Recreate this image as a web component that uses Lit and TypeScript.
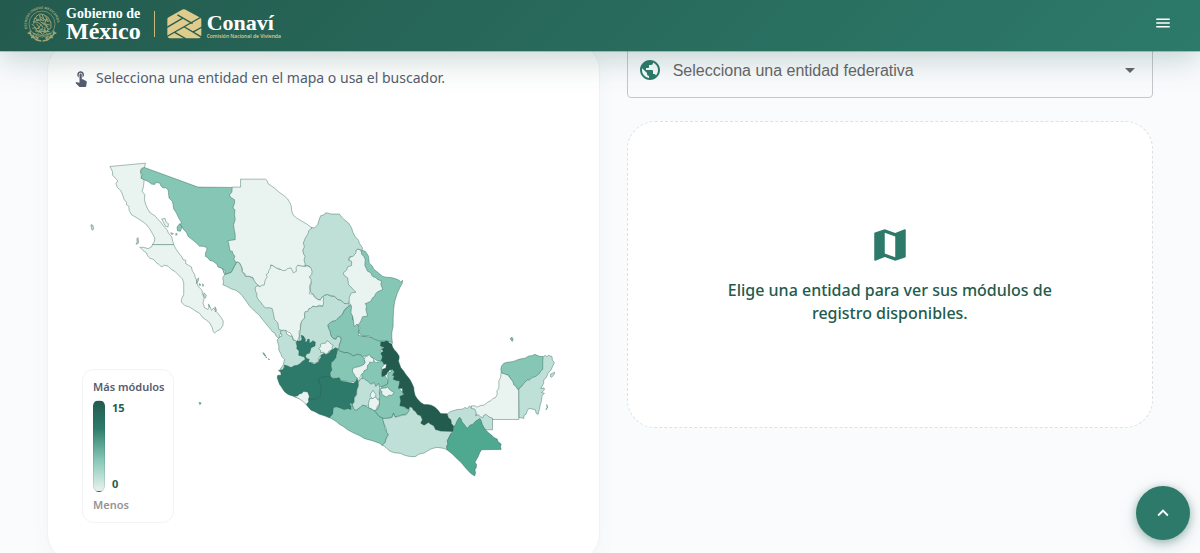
import { LitElement, html, svg, css } from "lit";
import { customElement, state } from "lit/decorators.js";

type Tone = "t0" | "t1" | "t2" | "t3" | "t4" | "t5";
interface Shape {
  name: string;
  tone: Tone;
  d: string;
}
interface Sheet {
  x: number;
  y: number;
  shapes: Shape[];
}

const s = (name: string, tone: Tone, d: string): Shape => ({ name, tone, d });

// The map is drawn in sheets; each sheet has its own origin inside the map's view box.
const SHEETS: Sheet[] = [
  {
    x: 780,
    y: 930,
    shapes: [
      s("San Luis Potosí", "t2", "M270-12 255 2 248 18 238 24 230 33 218 36 210 42 205 47 208 58 212 65 215 80 222 88 230 90 235 80 245 85 244 96 240 105 235 118 240 125 255 130 265 130 275 135 282 140 295 135 304 137 310 143 325 138 332 144 340 145 355 155 372 155 378 140 365 125 372 110 390 97 345 85 310 80 298 78 298 60 300 30 285-20Z"),
    ],
  },
  {
    x: 660,
    y: 480,
    shapes: [
      s("Sinaloa", "t1", "M8 325 15 345 35 338 50 308 58 308 66 322 68 335 78 350 88 350 100 355 112 372 122 380 150 400 200 500 192 518 186 520 180 528 182 540 176 536 170 530 165 520 160 518 145 500 132 484 120 468 105 455 90 440 78 422 65 405 50 393 35 388 20 380 10 376 12 366 9 357 15 345Z"),
      s("Zacatecas", "t1", "M308 415 315 407 325 405 335 410 345 410 355 420 365 422 375 432 388 430 390 440 380 446 375 452 368 466 358 474 350 483 338 486 330 492 325 497 328 508 332 515 335 530 342 538 350 540 355 530 365 535 364 546 360 555 358 570 350 575 340 580 315 585 302 590 297 600 296 610 285 612 275 608 270 614 262 608 255 590 240 560 240 530 243 510 245 485 256 475 255 460 268 448 280 440 310 440Z"),
      s("Tamaulipas", "t2", "M428 272 438 275 443 282 448 290 450 310 460 320 463 328 480 342 490 350 500 353 515 354 528 357 540 362 545 368 550 362 550 370 542 385 535 400 527 425 524 445 523 460 522 480 522 500 518 520 518 535 520 552 510 546 500 545 480 545 462 538 450 530 430 530 418 520 422 505 400 480 420 300Z"),
      s("Nuevo León", "t0", "M415 268 425 272 427 280 428 285 435 292 438 300 437 318 445 335 455 340 458 348 462 352 470 354 475 360 487 364 485 375 487 380 491 390 475 397 470 402 465 412 460 415 455 425 445 430 438 432 442 440 440 450 445 470 430 472 425 485 418 496 412 495 405 502 402 480 400 470 395 460 397 440 390 430 385 415 360 340 400 285Z"),
      s("Coahuila", "t1", "M275 203 285 205 295 195 300 178 304 168 315 165 318 160 325 160 335 163 360 163 368 173 375 180 388 190 397 205 401 218 407 230 418 242 420 250 430 265 428 272 422 270 415 268 410 273 410 280 405 286 402 290 390 292 388 302 397 305 397 318 385 322 382 332 372 340 375 348 385 355 388 375 400 388 410 398 398 400 395 402 390 415 390 425 388 430 385 433 375 432 365 422 355 420 345 410 335 409 325 405 315 407 308 415 303 422 295 420 272 395 275 370 270 355 270 320 250 318 250 250 262 215Z"),
      s("Durango", "t0", "M152 318 160 318 180 330 235 317 257 320 265 319 275 325 278 335 277 345 270 352 275 360 275 370 270 380 272 395 270 402 282 405 284 412 295 420 303 422 308 412 313 415 312 425 313 430 310 440 300 437 290 442 280 440 275 446 268 448 265 456 257 457 255 465 256 475 247 485 243 496 243 510 239 515 240 530 236 542 232 547 222 540 217 528 212 520 205 518 200 513 195 518 188 513 178 510 175 490 165 480 163 468 160 455 158 447 150 445 138 445 130 438 125 430 115 418 112 412 112 402 108 395 107 385 112 379 122 380 140 340Z"),
    ],
  },
  {
    x: 240,
    y: 450,
    shapes: [
      s("Baja California", "t0", "M90 50 197 40 194 53 184 56 182 68 185 82 193 90 191 110 187 125 195 135 194 150 198 165 205 180 212 190 225 198 235 210 244 218 250 228 262 240 266 250 276 262 279 275 282 285 218 285 224 275 225 265 218 252 210 238 200 225 190 217 172 205 155 195 148 182 147 170 140 165 140 158 132 148 130 140 126 130 122 122 112 112 108 100 114 94 107 86 98 76 98 66Z"),
      s("Baja California Sur", "t0", "M218 285 282 285 286 293 290 300 297 310 305 320 310 330 318 332 318 342 335 352 338 364 345 375 347 385 350 390 353 402 355 410 365 420 368 425 368 435 373 440 373 450 370 460 375 475 385 480 390 470 396 483 402 476 410 486 415 492 425 505 431 515 430 528 422 540 412 545 405 551 400 545 398 535 390 520 380 512 370 505 360 492 345 483 330 473 315 468 305 458 305 450 312 435 312 415 312 400 308 388 295 375 285 365 275 360 265 350 255 347 245 352 238 345 230 340 222 330 210 326 203 318 200 310 190 303 180 293 190 293 205 297 215 292Z"),
      s("Sonora", "t2", "M194 53 355 112 458 113 475 180 470 330 470 340 462 355 455 368 438 374 435 362 430 358 415 352 412 344 400 335 390 332 385 325 377 320 378 308 382 300 380 293 370 290 360 290 350 280 340 272 325 260 320 248 312 240 307 232 300 227 305 218 297 205 290 190 282 178 280 165 278 155 268 145 265 120 258 114 250 115 243 108 240 100 228 98 225 104 215 103 205 95 193 90 183 85 187 75 182 65 186 58Z"),
      s("Isla Tiburón", "t2", "M292 232 300 222 307 232 302 245 293 243Z"),
      s("Isla Ángel de la Guarda", "t0", "M246 208 256 206 258 216 266 222 265 232 257 230 252 220Z"),
      s("Islas del Golfo", "t1", "M273 249 281 252 276 255ZM289 250 293 255 288 257ZM352 390 357 385 356 394 350 402ZM358 402 364 406 360 409ZM368 403 372 406 370 411ZM373 430 380 438 377 446 371 440ZM386 464 390 467 388 472ZM406 472 411 482 407 487Z"),
      s("Isla Guadalupe", "t1", "M33 225 39 227 41 238 37 242 34 234Z"),
      s("Isla Cedros", "t1", "M168 282 172 280 171 267 175 264 176 280 172 284Z"),
    ],
  },
  {
    x: 660,
    y: 480,
    shapes: [
      s("Chihuahua", "t0", "M38 82 63 82 63 58 138 58 143 63 146 72 155 78 165 85 180 98 193 107 205 118 213 132 216 142 217 155 222 167 232 175 245 183 262 193 278 205 268 213 266 222 258 235 252 250 255 262 250 272 253 284 257 290 254 302 257 312 257 320 245 319 235 317 230 325 231 335 222 340 218 332 215 325 205 327 198 333 190 333 180 328 170 325 160 318 154 316 152 328 148 332 147 340 140 345 143 352 137 362 134 377 126 377 122 382 112 374 105 365 100 354 88 350 78 350 76 342 68 337 69 328 66 322 62 312 55 307 48 308 43 298 46 290 40 282 38 275 32 274 30 268 28 255 25 243 35 242 47 240 47 225 44 210 42 195 47 180 45 165 46 150 40 145 45 130 45 120 32 112 30 105 37 97Z"),
    ],
  },
  {
    x: 780,
    y: 930,
    shapes: [
      s("Nayarit", "t1", "M62 82 68 80 62 66 72 62 80 64 82 74 92 80 98 80 101 92 110 95 118 100 140 150 130 160 115 168 105 170 100 178 95 175 85 180 75 168 72 182 62 180 68 172 72 165 75 150 67 142 65 135 58 122 58 110 53 92Z"),
      s("Jalisco", "t4", "M125 78 132 80 138 90 137 97 142 98 145 90 150 90 150 102 158 97 160 94 168 98 167 110 155 115 153 124 150 132 142 133 138 142 143 148 150 150 147 158 155 160 165 165 178 158 180 150 184 145 185 138 195 132 200 136 210 130 216 122 222 120 228 115 235 118 235 130 230 138 230 145 222 155 215 160 217 170 218 182 212 192 215 203 220 220 190 260 150 280 105 262 92 258 85 255 76 248 70 240 65 232 60 225 53 205 55 198 65 198 64 190 57 183 70 182 75 174 75 167 85 170 95 175 103 170 115 168 122 163 130 155 137 152 136 143 125 140 118 138 119 125 112 118 113 110 110 100 114 94 122 96 128 90Z"),
      s("Michoacán", "t4", "M188 203 200 203 205 200 215 205 222 208 240 205 245 215 270 220 285 222 292 206 298 218 297 230 293 240 292 255 285 265 285 275 275 300 245 302 222 310 218 322 210 326 195 320 180 315 165 307 155 303 145 292 140 285 148 278 150 270 165 270 172 266 182 264 185 255 182 246 188 240 183 234 185 225 178 222 180 215 175 212Z"),
      s("Colima", "t0", "M104 262 115 260 120 254 128 252 132 247 145 248 150 262 147 270 148 278 140 286 130 276 118 268Z"),
      s("Aguascalientes", "t0", "M178 118 184 112 183 105 190 102 198 102 203 94 210 98 215 104 222 108 218 114 219 120 208 126 204 134 198 134 192 128 184 130 183 122Z"),
      s("Guanajuato", "t2", "M235 118 240 125 255 130 265 130 275 135 282 140 295 135 304 137 310 143 318 150 315 165 300 190 292 212 288 220 278 216 272 222 262 216 245 215 240 205 230 208 222 205 215 205 212 192 218 182 215 170 217 160 222 155 230 145Z"),
      s("Hidalgo", "t2", "M325 160 343 152 350 160 372 155 376 165 368 175 368 195 378 200 385 210 387 222 375 232 362 232 350 240 325 225 308 212 308 190Z"),
      s("Querétaro", "t0", "M315 150 318 143 325 140 330 135 334 142 343 148 344 158 338 160 332 158 330 164 325 168 324 180 315 184 313 190 306 196 302 205 303 212 298 215 294 206 288 202 285 195 280 188 280 178 290 174 300 172 312 167 318 160Z"),
      s("Puebla", "t2", "M385 200 388 190 396 188 395 178 405 180 406 200 412 212 422 210 426 215 418 235 430 250 440 270 430 290 445 300 452 290 460 305 440 315 428 318 418 320 408 324 403 312 398 324 388 328 370 328 360 322 350 310 344 303 356 295 361 280 358 262 362 245 368 232 385 225 388 212Z"),
      s("Estado de México", "t1", "M305 208 314 207 320 213 325 215 335 225 345 220 350 232 358 222 362 235 360 248 362 262 358 275 360 290 355 300 332 297 328 290 318 290 310 288 302 296 290 304 283 298 278 285 285 280 285 268 292 258 293 242 298 230 297 220Z"),
      s("Tlaxcala", "t0", "M362 240 370 237 380 236 386 233 390 240 398 246 405 250 398 258 388 258 384 264 375 260 368 255 368 247Z"),
      s("Ciudad de México", "t0", "M342 243 346 250 350 256 349 266 340 268 333 262 334 254Z"),
      s("Morelos", "t0", "M332 268 340 268 350 263 354 270 361 275 360 285 354 292 352 302 343 304 335 298 328 296 328 280Z"),
      s("Guerrero", "t2", "M222 295 232 293 245 297 255 302 266 298 275 302 275 290 270 285 276 280 280 290 283 300 290 304 302 296 310 288 318 290 328 296 343 303 350 310 360 322 372 328 378 360 388 375 380 390 378 400 370 410 362 403 340 395 325 391 315 388 302 380 290 375 276 368 265 362 252 352 240 345 232 338 220 330 210 325 220 315Z"),
      s("Islas Marías", "t2", "M10 130 14 132 19 140 15 139ZM19 142 22 144 20 146ZM27 148 30 150 28 152Z"),
    ],
  },
  {
    x: 1110,
    y: 960,
    shapes: [
      s("Oaxaca", "t1", "M40 298 60 297 70 294 73 282 78 294 90 292 98 288 110 288 120 275 120 265 125 262 150 270 200 320 250 335 245 345 240 355 235 365 237 375 233 382 235 393 225 388 205 385 195 387 185 390 175 396 165 402 150 405 140 412 128 413 115 411 105 408 95 403 75 401 60 395 50 385 40 378 48 370 50 362 58 345 52 340 52 330 45 315 42 305Z"),
      s("Veracruz", "t5", "M35 68 45 68 52 64 60 70 68 74 70 82 76 92 82 98 90 110 90 118 88 125 92 136 95 145 104 156 110 165 122 180 130 195 134 205 135 215 138 228 144 238 155 250 165 256 175 256 187 258 198 264 206 272 215 283 235 284 238 295 246 302 248 314 255 320 252 337 215 336 205 333 200 332 194 320 185 315 178 310 172 314 165 318 155 312 160 302 155 290 145 286 140 278 132 272 130 266 122 262 118 270 110 266 105 262 92 260 95 245 92 232 105 226 100 218 100 208 88 207 90 198 92 185 82 184 72 180 76 170 70 168 76 158 70 150 62 152 55 160 52 166 45 170 38 172 38 162 40 150 50 146 52 135 44 134 40 126 36 124 40 112 35 102 42 96 38 90 45 84 34 80Z"),
      s("Campeche", "t0", "M397 160 405 162 415 165 450 208 450 301 371 301 350 290 340 305 318 280 308 268 307 260 318 260 325 264 335 259 345 258 355 250 365 245 372 238 380 235 385 225 384 215 390 207 390 195 390 185 395 175Z"),
      s("Tabasco", "t1", "M235 284 245 277 255 274 265 271 280 270 288 265 295 268 302 260 308 268 318 270 322 282 320 290 328 287 335 293 342 296 345 288 352 286 360 293 371 297 371 332 350 332 335 315 325 305 295 335 270 310 255 322 248 314 246 302 238 295Z"),
      s("Chiapas", "t3", "M268 299 272 294 277 300 279 308 286 316 295 328 303 318 312 315 320 306 327 302 333 298 337 305 340 315 345 325 350 332 358 340 368 348 375 355 385 360 388 368 397 375 395 383 397 391 338 392 332 402 328 412 318 430 323 436 322 446 318 452 320 462 317 471 305 463 290 447 278 432 265 420 250 405 235 393 233 382 237 375 235 365 240 355 245 345 253 338 253 325 260 316 263 308Z"),
      s("Quintana Roo", "t1", "M523 112 530 108 534 112 540 108 550 112 551 122 557 130 552 140 547 152 538 162 535 170 530 178 525 182 525 192 516 208 526 206 527 212 518 220 527 222 520 230 518 245 515 255 512 270 508 286 502 282 500 272 492 270 480 268 475 276 472 285 466 288 465 298 458 296 451 296 450 210 500 130Z"),
      s("Yucatán", "t2", "M397 160 396 150 398 140 405 132 415 129 430 127 440 124 450 120 470 116 480 110 490 109 498 105 505 108 512 111 523 112 522 130 522 150 516 155 512 163 500 172 490 175 482 182 475 182 470 188 465 192 460 200 447 211 440 200 435 197 432 186 425 178 420 168 410 165Z"),
      s("Cozumel", "t1", "M545 172 546 164 558 159 556 166 549 174Z"),
      s("Banco Chinchorro", "t1", "M534 256 537 264 532 272 535 264Z"),
      s("Arrecife Alacranes", "t2", "M425 56 430 54 433 60 431 66 426 62Z"),
    ],
  },
  {
    x: 210,
    y: 1080,
    shapes: [s("Isla Socorro", "t2", "M388 130 393 130 394 134 390 136Z")],
  },
];

const ICONS = {
  touch:
    "M9 11.24V7.5C9 6.12 10.12 5 11.5 5S14 6.12 14 7.5v3.74c1.21-.81 2-2.18 2-3.74C16 5.01 13.99 3 11.5 3S7 5.01 7 7.5c0 1.56.79 2.93 2 3.74zm9.84 4.63l-4.54-2.26c-.17-.07-.35-.11-.54-.11H13v-6c0-.83-.67-1.5-1.5-1.5S10 6.67 10 7.5v10.74l-3.43-.72c-.08-.01-.15-.03-.24-.03-.31 0-.59.13-.79.33l-.79.8 4.94 4.94c.27.27.65.44 1.06.44h6.79c.75 0 1.33-.55 1.44-1.28l.75-5.27c.01-.07.02-.14.02-.2 0-.62-.38-1.16-.91-1.38z",
  globe:
    "M12 2C6.48 2 2 6.48 2 12s4.48 10 10 10 10-4.48 10-10S17.52 2 12 2zm-1 17.93c-3.95-.49-7-3.85-7-7.93 0-.62.08-1.21.21-1.79L9 15v1c0 1.1.9 2 2 2v1.93zm6.9-2.54c-.26-.81-1-1.39-1.9-1.39h-1v-3c0-.55-.45-1-1-1H8v-2h2c.55 0 1-.45 1-1V7h2c1.1 0 2-.9 2-2v-.41c2.93 1.19 5 4.06 5 7.41 0 2.08-.8 3.97-2.1 5.39z",
  map: "M20.5 3l-.16.03L15 5.1 9 3 3.36 4.9c-.21.07-.36.25-.36.48V20.5c0 .28.22.5.5.5l.16-.03L9 18.9l6 2.1 5.64-1.9c.21-.07.36-.25.36-.48V3.5c0-.28-.22-.5-.5-.5zM15 19l-6-2.11V5l6 2.11V19z",
  menu: "M3 18h18v-2H3v2zm0-5h18v-2H3v2zm0-7v2h18V6H3z",
  up: "M7.41 15.41L12 10.83l4.59 4.58L18 14l-6-6-6 6z",
  caret: "M7 10l5 5 5-5z",
};

@customElement("app-icon")
class AppIcon extends LitElement {
  static properties = { name: { type: String } };
  declare name: keyof typeof ICONS;
  static styles = css`
    :host {
      display: block;
      flex: none;
      width: 24px;
      height: 24px;
    }
    svg {
      display: block;
      width: 100%;
      height: 100%;
      fill: currentColor;
    }
  `;
  render() {
    return html`<svg viewBox="0 0 24 24" aria-hidden="true"><path d=${ICONS[this.name]} /></svg>`;
  }
}

@customElement("site-header")
class SiteHeader extends LitElement {
  static styles = css`
    :host {
      display: flex;
      align-items: center;
      justify-content: space-between;
      box-sizing: border-box;
      height: 51px;
      padding: 0 28px 4px 23px;
      color: #fff;
      background: linear-gradient(135deg, #235b4e 0%, #2d7a6a 100%);
      box-shadow: 0 8px 32px rgba(35, 91, 78, 0.25), 0 1px 0 rgba(35, 91, 78, 0.3);
    }
    .brand {
      display: flex;
      align-items: center;
      color: inherit;
      text-decoration: none;
      font-family: "Liberation Serif", serif;
      font-weight: 700;
    }
    .seal {
      width: 38px;
      height: 38px;
      fill: none;
      stroke: #9da577;
    }
    .seal text {
      fill: #b5b07c;
      stroke: none;
      font: 700 10px "Liberation Sans", sans-serif;
    }
    .names {
      display: flex;
      flex-direction: column;
      margin-left: 5px;
    }
    .small {
      font-size: 14px;
      line-height: 14px;
    }
    .big {
      font-size: 24px;
      line-height: 20px;
    }
    .agency {
      padding-top: 6px;
      font-size: 22px;
      line-height: 20px;
    }
    .rule {
      width: 1px;
      height: 26px;
      margin: 0 12px 0 13px;
      background: #c9b979;
    }
    .roof {
      width: 35px;
      height: 30px;
    }
    .sub {
      color: #e0cc8c;
      font: 600 5px/7px "Open Sans", sans-serif;
    }
    .menu {
      display: block;
      padding: 0 0 2px;
      border: 0;
      background: none;
      color: inherit;
    }
    .menu app-icon {
      width: 18px;
      height: 18px;
    }
  `;
  render() {
    return html`
      <a class="brand" href="#inicio">
        <svg class="seal" viewBox="0 0 114 114" aria-hidden="true">
          <defs><path id="ring" d="M13 71A46 46 0 1 1 101 71" /></defs>
          <text><textPath href="#ring">ESTADOS UNIDOS MEXICANOS</textPath></text>
          <circle cx="57" cy="57" r="39" stroke-width="2" />
          <path
            d="M18 82Q32 106 55 108M96 82Q82 106 59 108M14 84l9 2-2-9M24 98l10-1-5-8M38 106l7-7-8-5M100 84l-9 2 2-9M90 98l-10-1 5-8M76 106l-7-7 8-5"
            stroke-width="4"
          />
          <path
            d="M40 34q8-10 20-6l14 8q14 14 10 32l-12 10M44 30q-14 12-12 26M34 40l14 4M30 50l16 2M50 30l2 14 12 4M58 30l4 12 14 8M72 40l-8 16 16 4M46 54q12 4 14 14M40 56l10 12-12 4M52 50l16 12 8 12M60 68l-14 12M34 64l8 14 14 4M66 66l-2 18M78 70l-8 12M30 84q26 14 54 0M42 88l8-8 8 8 8-8 8 8M38 46q10 2 18-2M54 58l-8 14M26 58l8 4M28 70l10-2M66 34l12 16M52 36l16 10M58 52l18 14M50 74l20 2M36 78l44 2"
            stroke-width="3"
          />
        </svg>
        <span class="names">
          <span class="small">Gobierno de</span>
          <span class="big">México</span>
        </span>
        <span class="rule"></span>
        <svg class="roof" viewBox="500 26 104 88" aria-hidden="true">
          <path
            fill="#dfcb8b"
            d="M501 56Q501 52 505 50L542 29Q550 24 558 29L598 51Q602 53 602 57V105Q602 112 595 112H508Q501 112 501 105Z"
          />
          <path fill="none" stroke="#255f52" stroke-width="4" d="M500 80 548 52M531 43 576 69M500 107 604 48M604 79 577 94M552 79 606 111M523 95 556 114" />
        </svg>
        <span class="names">
          <span class="agency">Conaví</span>
          <span class="sub">Comisión Nacional de Vivienda</span>
        </span>
      </a>
      <button class="menu" aria-label="Abrir menú"><app-icon name="menu"></app-icon></button>
    `;
  }
}

@customElement("state-map")
class StateMap extends LitElement {
  static styles = css`
    :host {
      display: block;
      position: relative;
    }
    .map {
      display: block;
      width: 100%;
      height: auto;
    }
    path {
      stroke: rgba(35, 91, 78, 0.4);
      stroke-width: 3;
      stroke-linejoin: round;
      cursor: pointer;
    }
    .t0 {
      fill: #e9f3f0;
    }
    .t1 {
      fill: #bfe0d6;
    }
    .t2 {
      fill: #85c6b5;
    }
    .t3 {
      fill: #4fa890;
    }
    .t4 {
      fill: #2d7a6a;
    }
    .t5 {
      fill: #235b4e;
    }
    .legend {
      position: absolute;
      left: 10px;
      bottom: 14px;
      box-sizing: border-box;
      width: 92px;
      padding: 9px 10px;
      border: 1px solid #f1f3f4;
      border-radius: 12px;
      background: #fff;
      font: 600 11px/16px "Noto Sans", sans-serif;
      color: #565c6e;
      white-space: nowrap;
    }
    .scale {
      display: flex;
      gap: 7px;
      margin: 5px 0;
    }
    .bar {
      box-sizing: border-box;
      width: 12px;
      height: 92px;
      border: 1px solid rgba(35, 91, 78, 0.15);
      border-radius: 6px;
      background: linear-gradient(180deg, #235b4e 0%, #2d7a6a 30%, #85c6b5 65%, #e9f3f0 100%);
    }
    .ends {
      display: flex;
      flex-direction: column;
      justify-content: space-between;
      color: #235b4e;
      font-weight: 700;
    }
    .low {
      color: #949494;
    }
  `;
  render() {
    return html`
      <svg class="map" viewBox="216 306 1512 1308" role="img" aria-label="Mapa de México">
        ${SHEETS.map(
          (sheet) => svg`<g transform="translate(${sheet.x} ${sheet.y})">
            ${sheet.shapes.map((p) => svg`<path class=${p.tone} d=${p.d} aria-label=${p.name} />`)}
          </g>`,
        )}
      </svg>
      <div class="legend">
        <div>Más módulos</div>
        <div class="scale">
          <div class="bar"></div>
          <div class="ends"><span>15</span><span>0</span></div>
        </div>
        <div class="low">Menos</div>
      </div>
    `;
  }
}

@customElement("app-root")
class AppRoot extends LitElement {
  @state() private chosen = "";

  static styles = css`
    :host {
      display: block;
      min-height: 100vh;
      background: #fafbfd;
      font-family: "Noto Sans", sans-serif;
    }
    site-header {
      position: sticky;
      top: 0;
      z-index: 2;
    }
    main {
      display: grid;
      grid-template-columns: 105fr 100fr;
      align-items: start;
      gap: 27px;
      margin-top: -9px;
      padding: 0 47px;
    }
    .card {
      box-sizing: border-box;
      padding: 24px;
      border: 1px solid #f0f2f4;
      border-radius: 28px;
      background: #fff;
      box-shadow: 0 4px 20px rgba(35, 91, 78, 0.04);
    }
    .hint {
      display: flex;
      align-items: center;
      gap: 6px;
      margin: 0 0 13px;
      color: #565c6e;
      font-size: 14px;
      line-height: 22px;
    }
    .hint app-icon {
      width: 18px;
      height: 18px;
    }
    .side {
      display: flex;
      flex-direction: column;
      gap: 23px;
    }
    .field {
      display: grid;
      grid-template-columns: 24px 1fr 24px;
      align-items: center;
      box-sizing: border-box;
      height: 56px;
      padding: 0 10px;
      border: 1px solid #c5c8ca;
      border-radius: 4px;
      color: #666;
    }
    .field .globe {
      color: #2d7a6a;
    }
    .field select {
      grid-column: 2 / 4;
      grid-row: 1;
      appearance: none;
      width: 100%;
      height: 54px;
      padding: 0 24px 0 11px;
      border: 0;
      background: none;
      color: inherit;
      font: 16px "Liberation Sans", sans-serif;
    }
    .field .caret {
      grid-column: 3;
      grid-row: 1;
      pointer-events: none;
    }
    .empty {
      display: flex;
      flex-direction: column;
      align-items: center;
      justify-content: center;
      gap: 13px;
      box-sizing: border-box;
      min-height: 307px;
      padding: 24px;
      border: 1px dashed #dbe3e2;
      border-radius: 28px;
      background: #fff;
      color: #235b4e;
      text-align: center;
    }
    .empty app-icon {
      width: 42px;
      height: 42px;
      color: #2d7a6a;
    }
    .empty p {
      max-width: 340px;
      margin: 0;
      font-size: 16px;
      font-weight: 500;
      line-height: 23px;
    }
    .top {
      position: fixed;
      right: 10px;
      bottom: 13px;
      z-index: 3;
      display: grid;
      place-items: center;
      width: 54px;
      height: 54px;
      padding: 0;
      border: 0;
      border-radius: 50%;
      background: #2d7a6a;
      color: #fff;
      box-shadow: 0 2px 8px rgba(35, 91, 78, 0.4), 0 6px 20px rgba(35, 91, 78, 0.15);
    }
    .top app-icon {
      width: 22px;
      height: 22px;
    }
  `;

  private pick(e: Event) {
    this.chosen = (e.target as HTMLSelectElement).value;
  }

  private toTop() {
    window.scrollTo({ top: 0, behavior: "smooth" });
  }

  render() {
    const names = ["Chiapas", "Jalisco", "Michoacán", "Oaxaca", "Puebla", "Sonora", "Veracruz", "Yucatán"];
    return html`
      <site-header></site-header>
      <main>
        <section class="card">
          <p class="hint"><app-icon name="touch"></app-icon>Selecciona una entidad en el mapa o usa el buscador.</p>
          <state-map></state-map>
        </section>
        <section class="side">
          <div class="field">
            <app-icon class="globe" name="globe"></app-icon>
            <select aria-label="Entidad federativa" .value=${this.chosen} @change=${this.pick}>
              <option value="">Selecciona una entidad federativa</option>
              ${names.map((n) => html`<option value=${n}>${n}</option>`)}
            </select>
            <app-icon class="caret" name="caret"></app-icon>
          </div>
          <div class="empty">
            <app-icon name="map"></app-icon>
            <p>Elige una entidad para ver sus módulos de registro disponibles.</p>
          </div>
        </section>
      </main>
      <button class="top" aria-label="Volver arriba" @click=${this.toTop}><app-icon name="up"></app-icon></button>
    `;
  }
}
